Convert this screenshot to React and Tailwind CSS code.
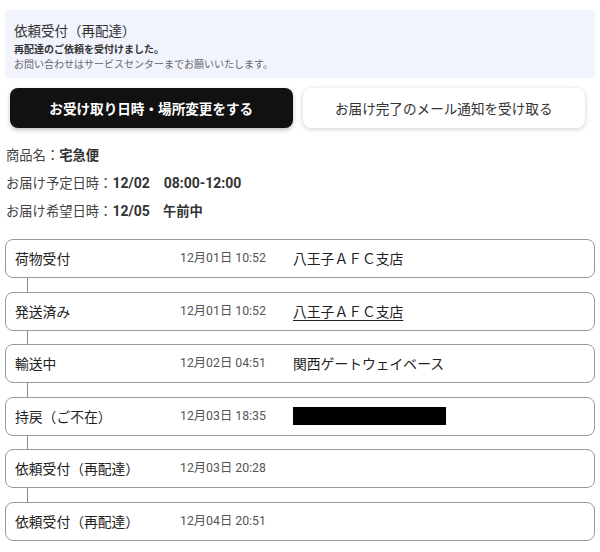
import React from "react";

const rows = [
  { label: "荷物受付", time: "12月01日 10:52", loc: "八王子ＡＦＣ支店" },
  { label: "発送済み", time: "12月01日 10:52", loc: "八王子ＡＦＣ支店", link: true },
  { label: "輸送中", time: "12月02日 04:51", loc: "関西ゲートウェイベース" },
  { label: "持戻（ご不在）", time: "12月03日 18:35", redacted: true },
  { label: "依頼受付（再配達）", time: "12月03日 20:28" },
  { label: "依頼受付（再配達）", time: "12月04日 20:51" },
];

const cjk = { fontFamily: '"Noto Sans CJK JP", sans-serif' };
const rob = { fontFamily: 'Roboto, "Noto Sans CJK JP", sans-serif' };

export default function App() {
  return (
    <div className="w-[600px] h-[552px] bg-white text-[#333] overflow-hidden" style={cjk}>
      <div className="pt-[10px] px-[5px]">
        <div className="h-[68px] rounded-[4px] bg-[#f1f3fd] pl-[9px] pt-[10px]">
          <div className="text-[13.5px] leading-[20px] text-[#333]">依頼受付（再配達）</div>
          <div className="text-[10px] leading-[15px] font-bold text-[#333] mt-[1px]">再配達のご依頼を受付けました。</div>
          <div className="text-[10px] leading-[15px] text-[#666]">お問い合わせはサービスセンターまでお願いいたします。</div>
        </div>
      </div>

      <div className="flex gap-[10px] pl-[10px] pr-[15px] mt-[10px]">
        <div className="flex-1 h-[40px] rounded-[8px] bg-[#111] text-white font-bold text-[13.6px] flex items-center justify-center shadow-[0_2px_4px_rgba(0,0,0,0.25)]">
          お受け取り日時・場所変更をする
        </div>
        <div className="flex-1 h-[40px] rounded-[8px] bg-white text-[#333] text-[13.6px] flex items-center justify-center shadow-[0_1px_5px_rgba(0,0,0,0.2)]">
          お届け完了のメール通知を受け取る
        </div>
      </div>

      <div className="mt-[13px] pl-[6px] text-[13.3px] leading-[28px] text-[#444]">
        <div>
          商品名：<span className="font-bold text-[#333]">宅急便</span>
        </div>
        <div>
          お届け予定日時：
          <span className="font-bold text-[#333] text-[14px]" style={rob}>12/02　08:00-12:00</span>
        </div>
        <div>
          お届け希望日時：
          <span className="font-bold text-[#333] text-[14px]" style={rob}>12/05</span>
          <span className="font-bold text-[#333]">　午前中</span>
        </div>
      </div>

      <div className="mt-[14px] px-[5px] flex flex-col">
        {rows.map((r, i) => (
          <React.Fragment key={i}>
            <div className="h-[39px] border border-[#999] rounded-[8px] flex items-center pl-[9px]">
              <div className="w-[165px] text-[13.8px] text-[#222]">{r.label}</div>
              <div className="w-[113px] text-[12.3px] text-[#555]" style={rob}>{r.time}</div>
              {r.loc && (
                <div className={"text-[13.8px] text-[#222]" + (r.link ? " underline underline-offset-[3px]" : "")}>
                  {r.loc}
                </div>
              )}
              {r.redacted && <div className="w-[153px] h-[18px] bg-black" />}
            </div>
            {i < rows.length - 1 && <div className="ml-[22px] w-px h-[13.5px] bg-[#888]" />}
          </React.Fragment>
        ))}
      </div>
    </div>
  );
}
